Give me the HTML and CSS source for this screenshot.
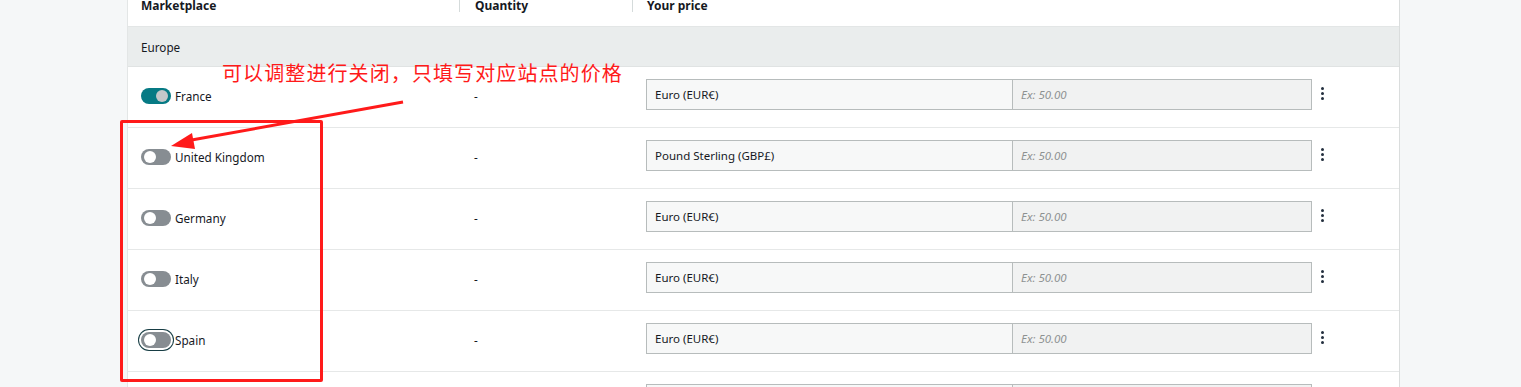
FILE: index.html
```html
<!DOCTYPE html>
<html lang="zh-CN">
<head>
  <meta charset="UTF-8" />
  <title>Marketplace pricing</title>
  <link rel="stylesheet" href="styles.css">
</head>
<body>
  <div class="panel">
    <div class="row head">
      <div class="col market">Marketplace</div>
      <div class="col qty">Quantity</div>
      <div class="col price">Your price</div>
    </div>
    <div class="region">Europe</div>

    <div class="row">
      <div class="col market"><span class="toggle on"></span>France</div>
      <div class="col qty">-</div>
      <div class="col price">
        <div class="price-input"><span class="cur">Euro (EUR€)</span><span class="amt">Ex: 50.00</span></div>
        <span class="kebab"><i></i><i></i><i></i></span>
      </div>
    </div>
    <div class="row">
      <div class="col market"><span class="toggle"></span>United Kingdom</div>
      <div class="col qty">-</div>
      <div class="col price">
        <div class="price-input"><span class="cur">Pound Sterling (GBP£)</span><span class="amt">Ex: 50.00</span></div>
        <span class="kebab"><i></i><i></i><i></i></span>
      </div>
    </div>
    <div class="row">
      <div class="col market"><span class="toggle"></span>Germany</div>
      <div class="col qty">-</div>
      <div class="col price">
        <div class="price-input"><span class="cur">Euro (EUR€)</span><span class="amt">Ex: 50.00</span></div>
        <span class="kebab"><i></i><i></i><i></i></span>
      </div>
    </div>
    <div class="row">
      <div class="col market"><span class="toggle"></span>Italy</div>
      <div class="col qty">-</div>
      <div class="col price">
        <div class="price-input"><span class="cur">Euro (EUR€)</span><span class="amt">Ex: 50.00</span></div>
        <span class="kebab"><i></i><i></i><i></i></span>
      </div>
    </div>
    <div class="row">
      <div class="col market"><span class="toggle focus"></span>Spain</div>
      <div class="col qty">-</div>
      <div class="col price">
        <div class="price-input"><span class="cur">Euro (EUR€)</span><span class="amt">Ex: 50.00</span></div>
        <span class="kebab"><i></i><i></i><i></i></span>
      </div>
    </div>
    <div class="row">
      <div class="col market"></div>
      <div class="col qty"></div>
      <div class="col price">
        <div class="price-input"><span class="cur"></span><span class="amt"></span></div>
      </div>
    </div>
  </div>

  <!-- annotation overlay -->
  <div class="note">可以调整进行关闭，只填写对应站点的价格</div>
  <div class="note-box"></div>
  <svg class="note-arrow" width="1521" height="387" viewBox="0 0 1521 387">
    <line x1="403" y1="102" x2="186" y2="141" stroke="#ff1a1a" stroke-width="3"/>
    <path d="M171 146 L192 133 L195 149 Z" fill="#ff1a1a"/>
  </svg>
</body>
</html>
```
FILE: styles.css
```css
* {margin:0;padding:0;box-sizing:border-box}
body {
  background:#f5f7f8;font-family:"Noto Sans","Liberation Sans",sans-serif;
  color:#16191f;font-size:11.7px;overflow:hidden;height:387px;
}
.panel {
  margin-left:127px;width:1273px;background:#fff;
  border-left:1px solid #e3e6e6;border-right:1px solid #dadddd;
}
.row {display:flex;height:61px;border-bottom:1px solid #e6e8e8;align-items:center}
.row.head {height:26px;align-items:flex-start;border-bottom:none;font-weight:700;font-size:12px}
.col {display:flex;align-items:center}
.market {width:331px;padding-left:13px}
.qty {width:173px;padding-left:15px}
.price {flex:1;padding-left:14px}
.head .qty, .head .price {border-left:1px solid #d5dbdb;height:12px;align-items:flex-start;line-height:12px}
.head .col {line-height:12px}

.region {
  height:41px;background:#eaeded;display:flex;align-items:center;padding-left:13px;
  border-top:1px solid #e3e6e6;border-bottom:1px solid #e0e3e3;
}

.toggle {
  width:30px;height:16px;border-radius:8px;background:#878d92;position:relative;margin-right:4px;
  flex-shrink:0;
}
.toggle::after {
  content:"";position:absolute;left:3px;top:2px;width:12px;height:12px;border-radius:50%;background:#fff;
}
.toggle.on {background:#067a84}
.toggle.on::after {left:auto;right:3px;background:#c3c7c9}
.toggle.focus {box-shadow:0 0 0 2px #fff,0 0 0 3px #173d44}

.row:not(.head) .col {margin-top:-2px}
.row:not(.head) .price {margin-top:-6px}
.price-input {
  width:666px;height:31px;display:flex;border:1px solid #b7bcbc;
}
.price-input .cur {
  width:366px;background:#f7f8f8;border-right:1px solid #b7bcbc;padding-left:8px;
  display:flex;align-items:center;font-size:11.5px;
}
.price-input .amt {
  flex:1;background:#f1f2f2;padding-left:8px;display:flex;align-items:center;
  font-style:italic;color:#8d9191;font-size:11.5px;
}
.kebab {display:flex;flex-direction:column;gap:2px;margin-left:9px;margin-top:-2px}
.kebab i {width:3px;height:3px;border-radius:50%;background:#232f3e}

.note {
  position:absolute;left:222px;top:61px;color:#ff1a1a;font-size:20px;line-height:24px;
  font-family:"Noto Sans CJK SC",sans-serif;letter-spacing:1.1px;
}
.note-box {
  position:absolute;left:120px;top:120px;width:203px;height:262px;
  border:3px solid #ff1a1a;border-radius:2px;
}
.note-arrow {position:absolute;left:0;top:0;pointer-events:none}
```
